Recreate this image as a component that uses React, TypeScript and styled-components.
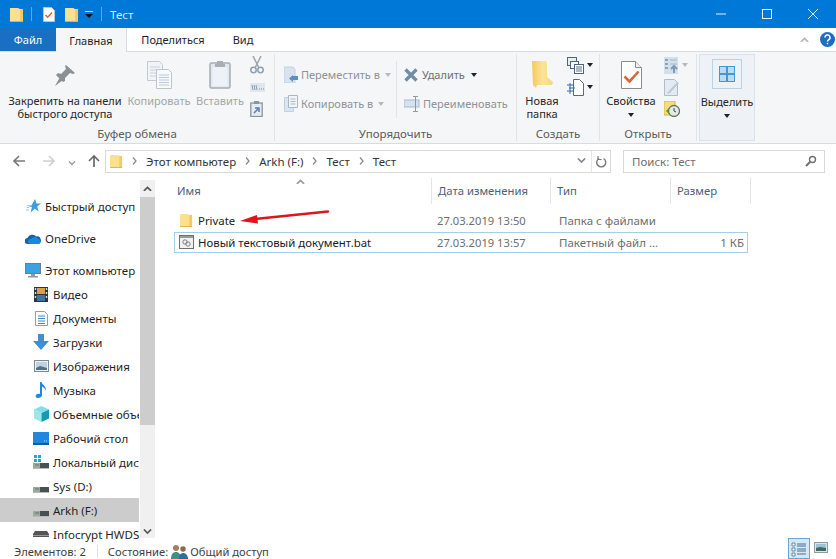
import React from "react";
import styled, { createGlobalStyle } from "styled-components";

const Global = createGlobalStyle`
  html, body { margin: 0; padding: 0; background: #fff; }
  body { font-family: "Noto Sans", "Open Sans", sans-serif; font-size: 11.5px; color: #1e1e1e; }
  svg { display: block; flex: none; }
`;
const Page = styled.div`width: 836px; height: 559px; overflow: hidden; display: flex; flex-direction: column; position: relative; background: #fff;`;
const TitleBar = styled.div`height: 28px; background: #0078d7; display: flex; align-items: center; padding-left: 10px; color: #d9ecfa; flex: none;`;
const TitleSep = styled.div<{ $l: number; $r: number }>`width: 1px; height: 14px; background: #5fa8e2; margin: 0 ${p => p.$r}px 0 ${p => p.$l}px;`;
const TitleText = styled.span`font-size: 11.5px; flex: 1;`;
const WinButton = styled.div`width: 46px; height: 28px; display: flex; align-items: center; justify-content: center;`;
const Gap = styled.div<{ $w: number }>`width: ${p => p.$w}px; flex: none;`;
const TabBar = styled.div`height: 24px; display: flex; align-items: stretch; background: #fff; border-bottom: 1px solid #dadbdc; flex: none; box-sizing: border-box; font-size: 11px;`;
const FileTab = styled.div`width: 56px; background: #1a6fc2; color: #fff; display: flex; align-items: center; justify-content: center;`;
const ActiveTab = styled.div`width: 70px; margin-bottom: -1px; background: #f5f6f7; border-right: 1px solid #dadbdc; display: flex; align-items: center; justify-content: center;`;
const Tab = styled.div<{ $w: number }>`width: ${p => p.$w}px; display: flex; align-items: center; justify-content: center;`;
const TabRight = styled.div`margin-left: auto; display: flex; align-items: center; gap: 11px; padding-right: 1px;`;
const Ribbon = styled.div`height: 92px; background: #f5f6f7; border-bottom: 1px solid #dadbdc; display: flex; padding-top: 2px; box-sizing: border-box; flex: none;`;
const Group = styled.div<{ $w: number }>`width: ${p => p.$w}px; height: 87px; display: flex; flex-direction: column; box-sizing: border-box; border-right: 1px solid #e2e3e4; flex: none;`;
const GroupBody = styled.div<{ $pl: number }>`flex: 1; display: flex; padding-left: ${p => p.$pl}px; padding-top: 1px; min-height: 0;`;
const GroupLabel = styled.div`height: 15px; padding-top: 1px; line-height: 15px; text-align: center; color: #5c5c5c;`;
const Big = styled.div<{ $w: number; $mr?: number; $off?: boolean }>`width: ${p => p.$w}px; margin-right: ${p => p.$mr ?? 0}px; flex: none; display: flex; flex-direction: column; align-items: center; color: ${p => p.$off ? "#a4a6a8" : "#262626"}; text-align: center; font-size: 11px; line-height: 13px; white-space: nowrap;`;
const BigIcon = styled.div`height: 39px; display: flex; align-items: center; justify-content: center;`;
const DropCaret = styled.div`width: 0; height: 0; border: 3px solid transparent; border-top: 4px solid #222; border-bottom: none; margin-top: 6px;`;
const SmallCaret = styled.span<{ $off?: boolean; $ml: number }>`width: 0; height: 0; border: 3px solid transparent; border-top: 4px solid ${p => p.$off ? "#b9b9b9" : "#222"}; border-bottom: none; margin-left: ${p => p.$ml}px; flex: none;`;
const SmallCol = styled.div<{ $w: number }>`width: ${p => p.$w}px; flex: none; display: flex; flex-direction: column; margin-top: -1px;`;
const SmallCell = styled.div`height: 22px; display: flex; align-items: center;`;
const RowCol = styled.div<{ $w: number }>`width: ${p => p.$w}px; flex: none; display: flex; flex-direction: column; padding-top: 5px;`;
const SmallRow = styled.div<{ $off?: boolean }>`height: 29px; display: flex; align-items: center; gap: 3px; font-size: 11px; color: ${p => p.$off ? "#8f9398" : "#6d6f72"}; white-space: nowrap;`;
const VSep = styled.div`width: 1px; height: 57px; margin-top: 6px; background: #e2e3e4; flex: none;`;
const SelectGroup = styled.div`width: 56px; height: 87px; margin-left: 2px; box-sizing: border-box; background: #eef2f7; border: 1px solid #d6e4f1; display: flex; flex-direction: column; align-items: center; font-size: 11px; line-height: 13px; color: #262626; padding-top: 4px;`;
const SelectIcon = styled.div`width: 30px; height: 30px; box-sizing: border-box; border: 1px solid #b9d2e8; display: flex; align-items: center; justify-content: center; margin-bottom: 6px;`;
const NavBar = styled.div`height: 34px; flex: none; display: flex; align-items: center; padding: 0 11px 0 11px; box-sizing: border-box;`;
const NavSlot = styled.div<{ $w: number }>`width: ${p => p.$w}px; flex: none; display: flex; justify-content: center;`;
const ChevLow = styled.svg`margin-top: 4px;`;
const AddressBox = styled.div`width: 506px; height: 23px; margin-left: 3px; box-sizing: border-box; border: 1px solid #d9d9d9; display: flex; align-items: center; padding-left: 4px; color: #333; font-size: 11.5px;`;
const Crumb = styled.span`white-space: nowrap;`;
const CrumbSep = styled.span<{ $w: number }>`width: ${p => p.$w}px; flex: none; display: flex; justify-content: center;`;
const AddrRight = styled.div`margin-left: auto; display: flex; align-items: center; height: 100%;`;
const AddrRefresh = styled.div`width: 18px; height: 100%; border-left: 1px solid #e6e6e6; display: flex; align-items: center; justify-content: center;`;
const SearchBox = styled.div`width: 202px; height: 23px; margin-left: 12px; box-sizing: border-box; border: 1px solid #d9d9d9; display: flex; align-items: center; justify-content: space-between; padding: 0 7px 0 8px; color: #6d6d6d;`;
const Main = styled.div`flex: 1; min-height: 0; display: flex;`;
const Sidebar = styled.div`width: 139px; flex: none; overflow: hidden; padding-top: 16px; box-sizing: border-box;`;
const NavRow = styled.div<{ $lvl: number; $top?: number; $sel?: boolean }>`height: 24px; display: flex; align-items: center; gap: 4px; padding-left: ${p => p.$lvl ? 33 : 25}px; margin-top: ${p => p.$top ?? 0}px; background: ${p => p.$sel ? "#cccccc" : "transparent"}; white-space: nowrap; color: #1f1f1f;`;
const NavIcon = styled.span`width: 16px; flex: none; display: flex; justify-content: center;`;
const Scrollbar = styled.div`width: 16px; flex: none; display: flex; flex-direction: column; align-items: stretch; border-left: 1px solid #fff; box-sizing: border-box; margin: 2px 0 5px;`;
const ScrollBtn = styled.div<{ $h: number }>`height: ${p => p.$h}px; flex: none; display: flex; align-items: center; justify-content: center; background: #f0f0f0;`;
const ScrollThumb = styled.div`height: 228px; background: #cdcdcd; flex: none;`;
const ScrollTrack = styled.div`flex: 1; background: #f0f0f0;`;
const ListPane = styled.div`flex: 1; min-width: 0; padding-left: 19px; display: flex; flex-direction: column; position: relative;`;
const Header = styled.div`height: 26px; display: flex; color: #4c607a; flex: none; font-size: 11.3px;`;
const HeadCell = styled.div<{ $w: number; $pl?: number }>`width: ${p => p.$w}px; flex: none; box-sizing: border-box; padding: 0 0 2px ${p => p.$pl ?? 6}px; border-right: 1px solid #e5e5e5; display: flex; align-items: center;`;
const SortCaret = styled.div`position: absolute; left: 141px; top: 1px;`;
const FileRow = styled.div<{ $focus?: boolean }>`width: 574px; height: 21px; box-sizing: border-box; display: flex; align-items: center; padding-bottom: 1px; border: 1px solid ${p => p.$focus ? "#a5cfe6" : "transparent"}; margin-top: ${p => p.$focus ? 1 : 6}px; flex: none;`;
const NameCell = styled.div`width: 258px; flex: none; display: flex; align-items: center; gap: 4px; padding-left: 3px; box-sizing: border-box; color: #1b1b1b; white-space: nowrap; font-size: 11.4px;`;
const FileIcon = styled.span`width: 16px; flex: none; display: flex; justify-content: center;`;
const DateCell = styled.div`width: 121px; flex: none; padding-left: 4px; box-sizing: border-box; color: #6d6d6d; white-space: nowrap; font-size: 11.2px;`;
const TypeCell = styled.div`width: 114px; flex: none; padding-left: 5px; box-sizing: border-box; color: #6d6d6d; white-space: nowrap;`;
const SizeCell = styled.div`flex: 1; text-align: right; padding-right: 3px; color: #6d6d6d;`;
const ArrowMark = styled.svg`position: absolute; left: 80px; top: 26px;`;
const StatusBar = styled.div`height: 16px; flex: none; display: flex; align-items: center; padding-left: 14px; color: #3f3f3f; white-space: nowrap; position: relative; font-size: 11.2px;`;
const StatusSep = styled.div`width: 1px; height: 13px; background: #e0e0e0; margin: 0 10px 0 11px;`;
const Views = styled.div`margin-left: auto; display: flex; align-items: flex-start; gap: 4px; padding-right: 8px; margin-top: -5px;`;
const ActiveView = styled.div`width: 22px; height: 21px; box-sizing: border-box; border: 1px solid #66a7d6; background: #d3e9f9; display: flex; justify-content: center; padding-top: 3px;`;
const ViewThumb = styled.div`padding-top: 4px;`;

const Folder = ({ s = 14 }: { s?: number }) => (
  <svg width={s} height={s + 1} viewBox="0 0 14 15">
    <path d="M0 1h8l2 1h3v12H0z" fill="#fbe08f" />
    <path d="M10 2h3v12h-3z" fill="#f3cb62" />
    <path d="M0 14h13v1H0z" fill="#e0b045" />
  </svg>
);
const Caret = () => (
  <svg width="8" height="7" viewBox="0 0 8 7"><path d="M0 0h8" stroke="#fff" strokeWidth="1.4" /><path d="M0 3h8L4 7z" fill="#111" /></svg>
);
const CheckDoc = () => (
  <svg width="12" height="15" viewBox="0 0 12 15"><path d="M.5.5h8l3 3v11H.5z" fill="#fff" stroke="#c4c4c4" /><path d="M2.5 8l2.2 2.2L9 5.5" fill="none" stroke="#d9603a" strokeWidth="1.6" /></svg>
);
const Pin = () => (
  <svg width="22" height="22" viewBox="0 0 22 22"><path d="M12 1l9 8-2 1-3-1-5 5 0 3-2 1-7-7 2-2 3 1 5-5-1-3zM6 13l3 3-8 6z" fill="#8b9095" /></svg>
);
const CopyDocs = () => (
  <svg width="25" height="28" viewBox="0 0 25 28">
    <path d="M.5.5h12l3 3v16H.5z" fill="#f1f3f6" stroke="#c3c9d1" />
    <path d="M3 6h10M3 9h10M3 12h10M3 15h10" stroke="#c9d2dc" />
    <path d="M9.500 8.500h12l3 3v16h-15z" fill="#f8f9fa" stroke="#bcc5cf" />
    <path d="M12 14h10M12 16.500h10M12 19h10M12 21.500h10M12 24h10" stroke="#bcc8d5" />
  </svg>
);
const Paste = () => (
  <svg width="22" height="29" viewBox="0 0 22 29">
    <rect x="1" y="3" width="20" height="25" rx="1.500" fill="#dfe7ef" stroke="#a6adb5" strokeWidth="1.500" />
    <rect x="3.500" y="7" width="15" height="19" fill="#edf2f8" />
    <path d="M8 4V1h6v3h2v3H6V4z" fill="#a9aeb4" />
  </svg>
);
const Scissors = () => (
  <svg width="14" height="18" viewBox="0 0 14 18"><path d="M3 0l6 12M11 0L5 12" stroke="#9ca4ad" strokeWidth="1.500" /><circle cx="3.500" cy="14" r="2.700" fill="none" stroke="#8fa0b0" strokeWidth="1.500" /><circle cx="10.500" cy="14" r="2.700" fill="none" stroke="#8fa0b0" strokeWidth="1.500" /></svg>
);
const PathIcon = () => (
  <svg width="15" height="9" viewBox="0 0 15 9"><rect width="15" height="9" fill="#dfe6ee" /><path d="M2 2l1 5M4 2l1 5M6 2l1 5" stroke="#8aa0b6" /><path d="M9 6h1M11 6h1M13 6h1" stroke="#7d8b99" /></svg>
);
const ShortcutPaste = () => (
  <svg width="13" height="16" viewBox="0 0 13 16"><rect x=".8" y="2" width="11.400" height="13.500" fill="#e4ebf2" stroke="#8b959f" strokeWidth="1.300" /><path d="M4 0h5v3H4z" fill="#8b959f" /><path d="M4 12l4-4M5 7h4v4" stroke="#5b7ea3" strokeWidth="1.500" fill="none" /></svg>
);
const MoveTo = () => (
  <svg width="14" height="17" viewBox="0 0 14 17"><path d="M0 1h9l2 2v14H0z" fill="#d6e3f0" stroke="#c3d2e0" /><path d="M14 8v4H9v2l-4-3.500L9 7v1z" fill="#5f8fbd" transform="translate(0 2)" /></svg>
);
const CopyTo = () => (
  <svg width="14" height="17" viewBox="0 0 14 17"><path d="M.5 2.500h9v14h-9z" fill="#d8e5f2" stroke="#bfd0e0" /><path d="M4.500.5h9v12h-9z" fill="#f2f5f8" stroke="#a9b7c4" /><path d="M6.500 4h5M6.500 6.500h5M6.500 9h5" stroke="#a9b7c4" /></svg>
);
const DeleteX = () => (
  <svg width="15" height="14" viewBox="0 0 15 14"><path d="M1.500 1.500l11 11M12.500 1.500l-11 11" stroke="#6f8ca8" strokeWidth="3.300" /></svg>
);
const Rename = () => (
  <svg width="16" height="16" viewBox="0 0 16 16"><rect y="4" width="15" height="7" fill="#d5e2ef" stroke="#a5b9cc" /><path d="M11.500 0v16M9 .5h5M9 15.500h5" stroke="#8e99a4" /></svg>
);
const NewFolder = () => (
  <svg width="21" height="29" viewBox="0 0 21 29">
    <defs><linearGradient id="nf" x1="0" x2="1"><stop offset="0" stopColor="#f6c95a" /><stop offset=".5" stopColor="#fbe39a" /><stop offset="1" stopColor="#f7d778" /></linearGradient></defs>
    <path d="M0 1l14 0 1 3v13l6 5-1 3H5l-1 3-3-3z" fill="url(#nf)" />
  </svg>
);
const NewItem = () => (
  <svg width="17" height="17" viewBox="0 0 17 17"><rect x=".5" y=".5" width="9" height="8" fill="#e7eef5" stroke="#4f6478" /><rect x="3.500" y="4.500" width="8" height="7" fill="#f7f9fb" stroke="#4f6478" /><rect x="7.500" y="7.500" width="9" height="9" fill="#fff" stroke="#4f6478" /><path d="M9 10h6M9 12h6M9 14h6" stroke="#5a7490" /></svg>
);
const EasyAccess = () => (
  <svg width="17" height="17" viewBox="0 0 17 17"><path d="M6.500.5h6l4 4v12h-10z" fill="#fff" stroke="#5c6a78" /><path d="M0 6h7M2 9h6M0 12h7M3 4v11" stroke="#2a6ea8" /></svg>
);
const Properties = () => (
  <svg width="21" height="28" viewBox="0 0 21 28"><path d="M.5.5h14l6 6v21H.5z" fill="#fff" stroke="#8a8a8a" /><path d="M14.500.5v6h6" fill="#f0f0f0" stroke="#8a8a8a" /><path d="M3.500 15.500l5 5 9-10" fill="none" stroke="#d9653b" strokeWidth="2.600" /></svg>
);
const OpenDoc = () => (
  <svg width="15" height="17" viewBox="0 0 15 17"><path d="M0 0h14v17H0z" fill="#d3dfea" /><path d="M1 2h3v2H1zM1 6h3v2H1zM1 10h3v2H1z" fill="#8ea4b8" /><path d="M6 3h7M6 7h7" stroke="#a7b8c8" /><path d="M10 16V9M7 12l3-3 3 3" stroke="#7e9ab5" strokeWidth="2" fill="none" /></svg>
);
const EditDoc = () => (
  <svg width="15" height="17" viewBox="0 0 15 17"><path d="M.5.5h10l3 3v13H.5z" fill="#e3eaf1" stroke="#aebdcb" /><path d="M4 13l9-10 2 1-9 10-3 1z" fill="#bccad7" /></svg>
);
const History = () => (
  <svg width="16" height="16" viewBox="0 0 16 16"><path d="M0 0h11v14H0z" fill="#f7dc7e" stroke="#d5b24a" /><circle cx="10" cy="10" r="5.500" fill="#e8e8e8" stroke="#5b7b5b" strokeWidth="1.300" /><path d="M10 7v3l2 1" stroke="#444" fill="none" /><path d="M2 10l3-3v6z" fill="#4a9a3a" /></svg>
);
const SelectGrid = () => (
  <svg width="16" height="16" viewBox="0 0 16 16"><rect width="16" height="16" fill="#4597d3" /><path d="M1 1h6v6H1zM9 1h6v6H9zM1 9h6v6H1zM9 9h6v6H9z" fill="#b8dcf4" /></svg>
);
const Arrow = ({ d, c }: { d: string; c: string }) => (
  <svg width="14" height="14" viewBox="0 0 14 14"><path d={d} fill="none" stroke={c} strokeWidth="1.700" /></svg>
);
const Chev = ({ c = "#8a8a8a", w = 8, up }: { c?: string; w?: number; up?: boolean }) => (
  <svg width={w} height={w * 0.6} viewBox="0 0 10 6"><path d={up ? "M1 5.500l4-4 4 4" : "M1 .5l4 4 4-4"} fill="none" stroke={c} strokeWidth="1.800" /></svg>
);
const RightChev = () => (
  <svg width="5" height="8" viewBox="0 0 5 8"><path d="M1 .5l3 3.500-3 3.500" fill="none" stroke="#8c8c8c" strokeWidth="1.300" /></svg>
);
const Refresh = () => (
  <svg width="11" height="13" viewBox="0 0 11 13"><path d="M3 3.500a4.500 4.500 0 1 0 4.500 0" fill="none" stroke="#777" strokeWidth="1.400" /><path d="M2 1v3.500h3.500" fill="none" stroke="#777" strokeWidth="1.200" /></svg>
);
const Search = () => (
  <svg width="12" height="12" viewBox="0 0 12 12"><circle cx="7.500" cy="4.500" r="3" fill="none" stroke="#6f6f6f" strokeWidth="1.400" /><path d="M5 7l-4 4" stroke="#6f6f6f" strokeWidth="2" /></svg>
);
const Star = () => (
  <svg width="15" height="15" viewBox="0 0 15 15"><path d="M9 0l1.500 4.500H15l-3.800 3 1.400 5-3.900-2.800-4 3.800 1.200-5.500L0 6.500h5.500z" fill="#3d9be0" /><path d="M0 11h3M1 8.500h2" stroke="#8fc6ee" /></svg>
);
const Cloud = () => (
  <svg width="16" height="11" viewBox="0 0 16 11"><path d="M3 11a3 3 0 0 1-.5-6A5 5 0 0 1 11 3.500 3.500 3.500 0 0 1 13 11z" fill="#0f62ae" /><path d="M5 11a2.500 2.500 0 0 1 1-5 4 4 0 0 1 7 0 2.500 2.500 0 0 1 0 5z" fill="#1c86d8" /></svg>
);
const Monitor = () => (
  <svg width="16" height="15" viewBox="0 0 16 15"><rect x=".5" y=".5" width="15" height="10" fill="#3aa3e3" stroke="#6d7f8f" /><path d="M6 11h4v2H6zM3 13h10v1.500H3z" fill="#8a9aa8" /></svg>
);
const Video = () => (
  <svg width="14" height="15" viewBox="0 0 14 15"><rect width="14" height="15" fill="#2a3440" /><rect x="3" y="1" width="8" height="6" fill="#d6a24a" /><rect x="3" y="8" width="8" height="6" fill="#3f74a6" /><path d="M.8 1h1.400v2H.8zM.8 5h1.400v2H.8zM.8 9h1.400v2H.8zM11.800 1h1.400v2h-1.400zM11.800 5h1.400v2h-1.400zM11.800 9h1.400v2h-1.400z" fill="#d5dbe0" /></svg>
);
const Docs = () => (
  <svg width="13" height="15" viewBox="0 0 13 15"><path d="M.5.5h9l3 3v11H.5z" fill="#fff" stroke="#8aa0b4" /><path d="M3 5h7M3 7.500h7M3 10h7M3 12.500h7" stroke="#3f88c5" /></svg>
);
const Down = () => (
  <svg width="16" height="16" viewBox="0 0 16 16"><path d="M5 0h6v7h5l-8 9-8-9h5z" fill="#3f8fd8" /></svg>
);
const Pic = () => (
  <svg width="15" height="12" viewBox="0 0 15 12"><rect x=".5" y=".5" width="14" height="11" fill="#eef2f5" stroke="#7c8894" /><rect x="2" y="2" width="11" height="8" fill="#bcd3e4" /><path d="M2 8l4-2 7 2v2H2z" fill="#566f7e" /></svg>
);
const Music = () => (
  <svg width="12" height="16" viewBox="0 0 12 16"><path d="M5 0h1.500c.5 3 5.500 4 4 9-.5-3-2.500-4-3.500-4.500V13c0 2-2 3-4 3s-3-1.500-2-3 3-1.500 4-1z" fill="#1e88e5" /></svg>
);
const Cube = () => (
  <svg width="15" height="16" viewBox="0 0 15 16"><path d="M7.500 0L15 3.500 7.500 7 0 3.500z" fill="#7fe0e8" /><path d="M0 3.500L7.500 7v9L0 12.500z" fill="#9ae6e8" /><path d="M15 3.500L7.500 7v9l7.500-3.500z" fill="#179ab0" /></svg>
);
const Desktop = () => (
  <svg width="16" height="13" viewBox="0 0 16 13"><rect width="16" height="13" fill="#1e88e0" /><rect y="11" width="16" height="2" fill="#0d5fa8" /><path d="M11 9h1M13 9h1" stroke="#b7dcf6" /></svg>
);
const Drive = ({ sys }: { sys?: boolean }) => (
  <svg width="16" height="14" viewBox="0 0 16 14">
    {sys && <path d="M1 0h3v3H1zM5 0h3v3H5zM1 4h3v3H1zM5 4h3v3H5z" fill="#2aa5c9" />}
    <path d="M0 8h8v5H0z" fill="#9da8a0" />
    <path d="M7 8h9v5H7z" fill="#4a4f52" />
    <path d="M0 13h16v1H0z" fill="#b8bcb8" />
    <path d="M2 10h4" stroke="#5f7f6a" />
  </svg>
);
const Usb = () => (
  <svg width="16" height="6" viewBox="0 0 16 6"><path d="M2 0h12l2 3v3H0V3z" fill="#555" /><path d="M0 4h16v1H0z" fill="#999" /></svg>
);
const BatFile = () => (
  <svg width="15" height="14" viewBox="0 0 15 14"><rect x=".5" y=".5" width="14" height="13" fill="#f2f2f2" stroke="#6f6f6f" /><path d="M1 1h13v2H1z" fill="#9a9a9a" /><circle cx="6" cy="7" r="2.200" fill="none" stroke="#7f7f7f" /><circle cx="9" cy="9" r="2.200" fill="none" stroke="#7f7f7f" /></svg>
);
const People = () => (
  <svg width="17" height="15" viewBox="0 0 17 15"><circle cx="5" cy="4" r="3" fill="#a57f58" /><path d="M0 15c0-5 2-7 5-7s5 2 5 7z" fill="#3f8f86" /><circle cx="12" cy="5" r="2.700" fill="#8a6a4a" /><path d="M8 15c0-4 1.500-6 4-6s5 2 5 6z" fill="#2f6fa0" /></svg>
);
const DetailsView = () => (
  <svg width="16" height="15" viewBox="0 0 16 15"><path d="M1 1h3v3H1zM1 6h3v3H1zM1 11h3v3H1z" fill="#fff" stroke="#4a6f90" strokeWidth=".8" /><path d="M6 2h9M6 4h9M6 7h9M6 9h9M6 12h9" stroke="#4a6f90" /></svg>
);
const ThumbView = () => (
  <svg width="14" height="11" viewBox="0 0 14 11"><rect x=".5" y=".5" width="13" height="10" fill="#dde6ed" stroke="#8e9aa6" /><path d="M2 2h10v4H2z" fill="#9cc2dd" /><path d="M2 6l4-1 6 1v3H2z" fill="#3f6b58" /></svg>
);

const navItems: { t: string; i: React.ReactNode; lvl: number; top?: number; sel?: boolean }[] = [
  { t: "Быстрый доступ", i: <Star />, lvl: 0 },
  { t: "OneDrive", i: <Cloud />, lvl: 0, top: 8 },
  { t: "Этот компьютер", i: <Monitor />, lvl: 0, top: 8 },
  { t: "Видео", i: <Video />, lvl: 1 },
  { t: "Документы", i: <Docs />, lvl: 1 },
  { t: "Загрузки", i: <Down />, lvl: 1 },
  { t: "Изображения", i: <Pic />, lvl: 1 },
  { t: "Музыка", i: <Music />, lvl: 1 },
  { t: "Объемные объекты", i: <Cube />, lvl: 1 },
  { t: "Рабочий стол", i: <Desktop />, lvl: 1 },
  { t: "Локальный диск (C:)", i: <Drive sys />, lvl: 1 },
  { t: "Sys (D:)", i: <Drive />, lvl: 1 },
  { t: "Arkh (F:)", i: <Drive />, lvl: 1, sel: true },
  { t: "Infocrypt HWDS", i: <Usb />, lvl: 1 },
];

export default function App() {
  return (
    <Page>
      <Global />
      <TitleBar>
        <Folder />
        <TitleSep $l={7} $r={11} />
        <CheckDoc />
        <Gap $w={10} />
        <Folder />
        <Gap $w={6} />
        <Caret />
        <TitleSep $l={8} $r={8} />
        <TitleText>Тест</TitleText>
        <WinButton><svg width="10" height="10" viewBox="0 0 10 10"><path d="M0 5h10" stroke="#dff0fc" /></svg></WinButton>
        <WinButton><svg width="10" height="10" viewBox="0 0 10 10"><rect x=".5" y=".5" width="9" height="9" fill="none" stroke="#dff0fc" /></svg></WinButton>
        <WinButton><svg width="10" height="10" viewBox="0 0 10 10"><path d="M0 0l10 10M10 0L0 10" stroke="#dff0fc" /></svg></WinButton>
      </TitleBar>
      <TabBar>
        <FileTab>Файл</FileTab>
        <ActiveTab>Главная</ActiveTab>
        <Tab $w={92}>Поделиться</Tab>
        <Tab $w={48}>Вид</Tab>
        <TabRight>
          <Chev c="#b5b5b5" w={9} up />
          <svg width="15" height="15" viewBox="0 0 15 15"><circle cx="7.500" cy="7.500" r="7.500" fill="#1a6fc2" /><path d="M5 5.500a2.500 2.500 0 1 1 3.500 2.300C7.800 8.200 7.500 8.600 7.500 9.500M7.500 10.800v1.500" fill="none" stroke="#fff" strokeWidth="1.500" /></svg>
        </TabRight>
      </TabBar>
      <Ribbon>
        <Group $w={275}>
          <GroupBody $pl={8}>
            <Big $w={114} $mr={5}><BigIcon><Pin /></BigIcon>Закрепить на панели<br />быстрого доступа</Big>
            <Big $w={64} $mr={6} $off><BigIcon><CopyDocs /></BigIcon>Копировать</Big>
            <Big $w={46} $mr={7} $off><BigIcon><Paste /></BigIcon>Вставить</Big>
            <SmallCol $w={16}>
              <SmallCell><Scissors /></SmallCell>
              <SmallCell><PathIcon /></SmallCell>
              <SmallCell><ShortcutPaste /></SmallCell>
            </SmallCol>
          </GroupBody>
          <GroupLabel>Буфер обмена</GroupLabel>
        </Group>
        <Group $w={242}>
          <GroupBody $pl={9}>
            <RowCol $w={112}>
              <SmallRow $off><MoveTo />Переместить в<SmallCaret $off $ml={2} /></SmallRow>
              <SmallRow $off><CopyTo />Копировать в<SmallCaret $off $ml={2} /></SmallRow>
            </RowCol>
            <VSep />
            <Gap $w={7} />
            <RowCol $w={112}>
              <SmallRow><DeleteX />Удалить<SmallCaret $ml={3} /></SmallRow>
              <SmallRow $off><Rename />Переименовать</SmallRow>
            </RowCol>
          </GroupBody>
          <GroupLabel>Упорядочить</GroupLabel>
        </Group>
        <Group $w={83}>
          <GroupBody $pl={9}>
            <Big $w={32} $mr={9}><BigIcon><NewFolder /></BigIcon>Новая<br />папка</Big>
            <SmallCol $w={30}>
              <SmallCell><NewItem /><SmallCaret $ml={3} /></SmallCell>
              <SmallCell><EasyAccess /><SmallCaret $ml={3} /></SmallCell>
            </SmallCol>
          </GroupBody>
          <GroupLabel>Создать</GroupLabel>
        </Group>
        <Group $w={97}>
          <GroupBody $pl={7}>
            <Big $w={48} $mr={9}><BigIcon><Properties /></BigIcon>Свойства<DropCaret /></Big>
            <SmallCol $w={30}>
              <SmallCell><OpenDoc /><SmallCaret $off $ml={3} /></SmallCell>
              <SmallCell><EditDoc /></SmallCell>
              <SmallCell><History /></SmallCell>
            </SmallCol>
          </GroupBody>
          <GroupLabel>Открыть</GroupLabel>
        </Group>
        <SelectGroup>
          <SelectIcon><SelectGrid /></SelectIcon>
          Выделить
          <DropCaret />
        </SelectGroup>
      </Ribbon>
      <NavBar>
        <NavSlot $w={16}><Arrow c="#7a7a7a" d="M13 7H2M7 2L2 7l5 5" /></NavSlot>
        <Gap $w={14} />
        <NavSlot $w={16}><Arrow c="#d0d0d0" d="M1 7h11M7 2l5 5-5 5" /></NavSlot>
        <Gap $w={10} />
        <NavSlot $w={10}><ChevLow width="8" height="5" viewBox="0 0 8 5"><path d="M1 .5l3 3 3-3" fill="none" stroke="#9a9a9a" strokeWidth="1.400" /></ChevLow></NavSlot>
        <Gap $w={9} />
        <NavSlot $w={16}><Arrow c="#6a6a6a" d="M7 13V2M2 7l5-5 5 5" /></NavSlot>
        <AddressBox>
          <Folder s={13} />
          <CrumbSep $w={23}><RightChev /></CrumbSep>
          <Crumb>Этот компьютер</Crumb>
          <CrumbSep $w={23}><RightChev /></CrumbSep>
          <Crumb>Arkh (F:)</Crumb>
          <CrumbSep $w={23}><RightChev /></CrumbSep>
          <Crumb>Тест</Crumb>
          <CrumbSep $w={23}><RightChev /></CrumbSep>
          <Crumb>Тест</Crumb>
          <AddrRight>
            <Chev c="#7f8a94" w={9} />
            <Gap $w={5} />
            <AddrRefresh><Refresh /></AddrRefresh>
          </AddrRight>
        </AddressBox>
        <SearchBox>
          Поиск: Тест
          <Search />
        </SearchBox>
      </NavBar>
      <Main>
        <Sidebar>
          {navItems.map(n => (
            <NavRow key={n.t} $lvl={n.lvl} $top={n.top} $sel={n.sel}><NavIcon>{n.i}</NavIcon>{n.t}</NavRow>
          ))}
        </Sidebar>
        <Scrollbar>
          <ScrollBtn $h={17}><Chev c="#555" w={9} up /></ScrollBtn>
          <ScrollThumb />
          <ScrollTrack />
          <ScrollBtn $h={12}><Chev c="#555" w={9} /></ScrollBtn>
        </Scrollbar>
        <ListPane>
          <SortCaret><Chev c="#9a9a9a" w={9} up /></SortCaret>
          <Header>
            <HeadCell $w={258} $pl={3}>Имя</HeadCell>
            <HeadCell $w={119}>Дата изменения</HeadCell>
            <HeadCell $w={120}>Тип</HeadCell>
            <HeadCell $w={80}>Размер</HeadCell>
          </Header>
          <FileRow>
            <NameCell><FileIcon><Folder s={13} /></FileIcon>Private</NameCell>
            <DateCell>27.03.2019 13:50</DateCell>
            <TypeCell>Папка с файлами</TypeCell>
            <SizeCell />
          </FileRow>
          <FileRow $focus>
            <NameCell><FileIcon><BatFile /></FileIcon>Новый текстовый документ.bat</NameCell>
            <DateCell>27.03.2019 13:57</DateCell>
            <TypeCell>Пакетный файл ...</TypeCell>
            <SizeCell>1 КБ</SizeCell>
          </FileRow>
          <ArrowMark width="95" height="22" viewBox="0 0 95 22">
            <path d="M93 7.500L20 15" stroke="#e0141c" strokeWidth="2.500" strokeLinecap="round" fill="none" />
            <path d="M5 17L22 11l1 8.500z" fill="#e0141c" />
          </ArrowMark>
        </ListPane>
      </Main>
      <StatusBar>
        Элементов: 2
        <StatusSep />
        Состояние:
        <Gap $w={3} />
        <People />
        <Gap $w={2} />
        Общий доступ
        <Views>
          <ActiveView><DetailsView /></ActiveView>
          <ViewThumb><ThumbView /></ViewThumb>
        </Views>
      </StatusBar>
    </Page>
  );
}
